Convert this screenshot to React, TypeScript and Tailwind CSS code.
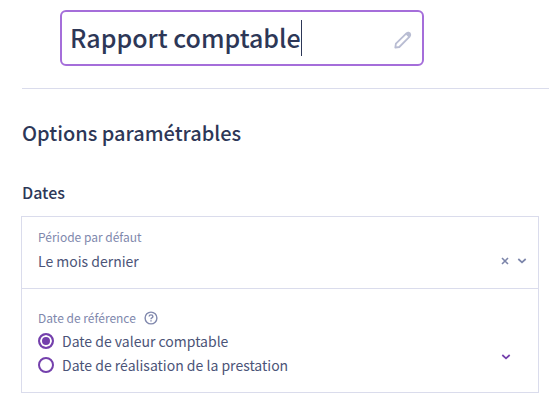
import React, { useState } from 'react';

const PencilIcon = () => (
  <svg width="18" height="18" viewBox="0 0 18 18" fill="none" stroke="#b9bdd3" strokeWidth="1.8" strokeLinejoin="round">
    <path d="M1.3 16.7 L1.9 12.7 L12.4 2.4 Q14 1.1 15.8 2.2 Q16.9 4 15.6 5.7 L5.3 16 Z" />
    <path d="M11.8 3 L14.4 1.4 L16.6 3.4 L15 6.2 Z" fill="#b9bdd3" strokeWidth="1" />
  </svg>
);

const ChevronIcon = () => (
  <svg width="10" height="6" viewBox="0 0 10 6" fill="none" stroke="currentColor" strokeWidth="1.7">
    <path d="M1.3 1 L5 4.4 L8.7 1" />
  </svg>
);

const HelpIcon = () => (
  <svg width="14" height="14" viewBox="0 0 14 14" fill="none" stroke="currentColor" strokeWidth="1.4">
    <circle cx="7" cy="7" r="5.9" />
    <path d="M5.1 5.5 Q5.2 3.9 7 3.9 Q8.9 3.9 8.9 5.4 Q8.9 6.3 7.8 6.9 Q7 7.3 7 8.2" />
    <path d="M7 9.2 V10.6" />
  </svg>
);

const references = [
  { value: 'valeur', label: 'Date de valeur comptable' },
  { value: 'realisation', label: 'Date de réalisation de la prestation' },
];

export default function App() {
  const [title, setTitle] = useState('Rapport comptable');
  const [period, setPeriod] = useState('last-month');
  const [reference, setReference] = useState('valeur');

  return (
    <main className="bg-white pt-[10px] pb-4 pl-[22px] font-['Source_Sans_Pro','Noto_Sans_CJK_SC',sans-serif] text-[#2d3757]">
      <header className="border-b border-[#dadcec] pb-[22px] pl-[38px]">
        <div className="flex h-14 w-[364px] max-w-full items-center rounded-md border-2 border-[#a56eda] pr-[10px] pl-2">
          <input
            aria-label="Titre du rapport"
            className="field-sizing-content h-9 min-w-0 bg-transparent text-[25px] font-medium outline-none"
            value={title}
            onChange={(e) => setTitle(e.target.value)}
          />
          <span className="h-9 w-px bg-[#2d3757]" />
          <button aria-label="Modifier le titre" className="mt-1 ml-auto">
            <PencilIcon />
          </button>
        </div>
      </header>

      <h2 className="mt-[29px] text-xl leading-[30px] font-medium">Options paramétrables</h2>
      <h3 className="mt-8 text-base leading-6 font-medium">Dates</h3>

      <section className="mt-3 mr-[10px] -ml-px border border-[#dadcec]">
        <div className="border-b border-[#dadcec] px-4 pt-2 pb-[15px]">
          <label htmlFor="period" className="block text-xs leading-6 text-[#8088ad]">Période par défaut</label>
          <div className="flex h-6 items-center text-[#7c85aa]">
            <select
              id="period"
              className="min-w-0 flex-1 appearance-none bg-transparent text-sm leading-6 text-[#4b5478] outline-none"
              value={period}
              onChange={(e) => setPeriod(e.target.value)}
            >
              <option value="" />
              <option value="last-month">Le mois dernier</option>
            </select>
            <button aria-label="Effacer" className="mr-2" onClick={() => setPeriod('')}>
              <svg width="8" height="8" viewBox="0 0 8 8" stroke="currentColor" strokeWidth="1.6">
                <path d="M1 1 L7 7 M7 1 L1 7" />
              </svg>
            </button>
            <span className="-mr-[5px]">
              <ChevronIcon />
            </span>
          </div>
        </div>

        <div className="flex items-center justify-between px-4 pt-[18px] pb-[15px]">
          <fieldset className="min-w-0">
            <legend className="flex items-center gap-2 text-xs leading-[22px] text-[#8088ad]">
              Date de référence
              <HelpIcon />
            </legend>
            {references.map((item) => (
              <label key={item.value} className="flex items-center gap-2 text-sm leading-6 text-[#4b5478]">
                <input
                  type="radio"
                  name="reference"
                  className="size-4 shrink-0 appearance-none rounded-full border-2 border-[#7440ac] checked:bg-[#7440ac] checked:shadow-[inset_0_0_0_2px_white]"
                  checked={reference === item.value}
                  onChange={() => setReference(item.value)}
                />
                {item.label}
              </label>
            ))}
          </fieldset>
          <button aria-label="Afficher les options" className="mt-[30px] mr-[11px] text-[#7440ac]">
            <ChevronIcon />
          </button>
        </div>
      </section>
    </main>
  );
}
